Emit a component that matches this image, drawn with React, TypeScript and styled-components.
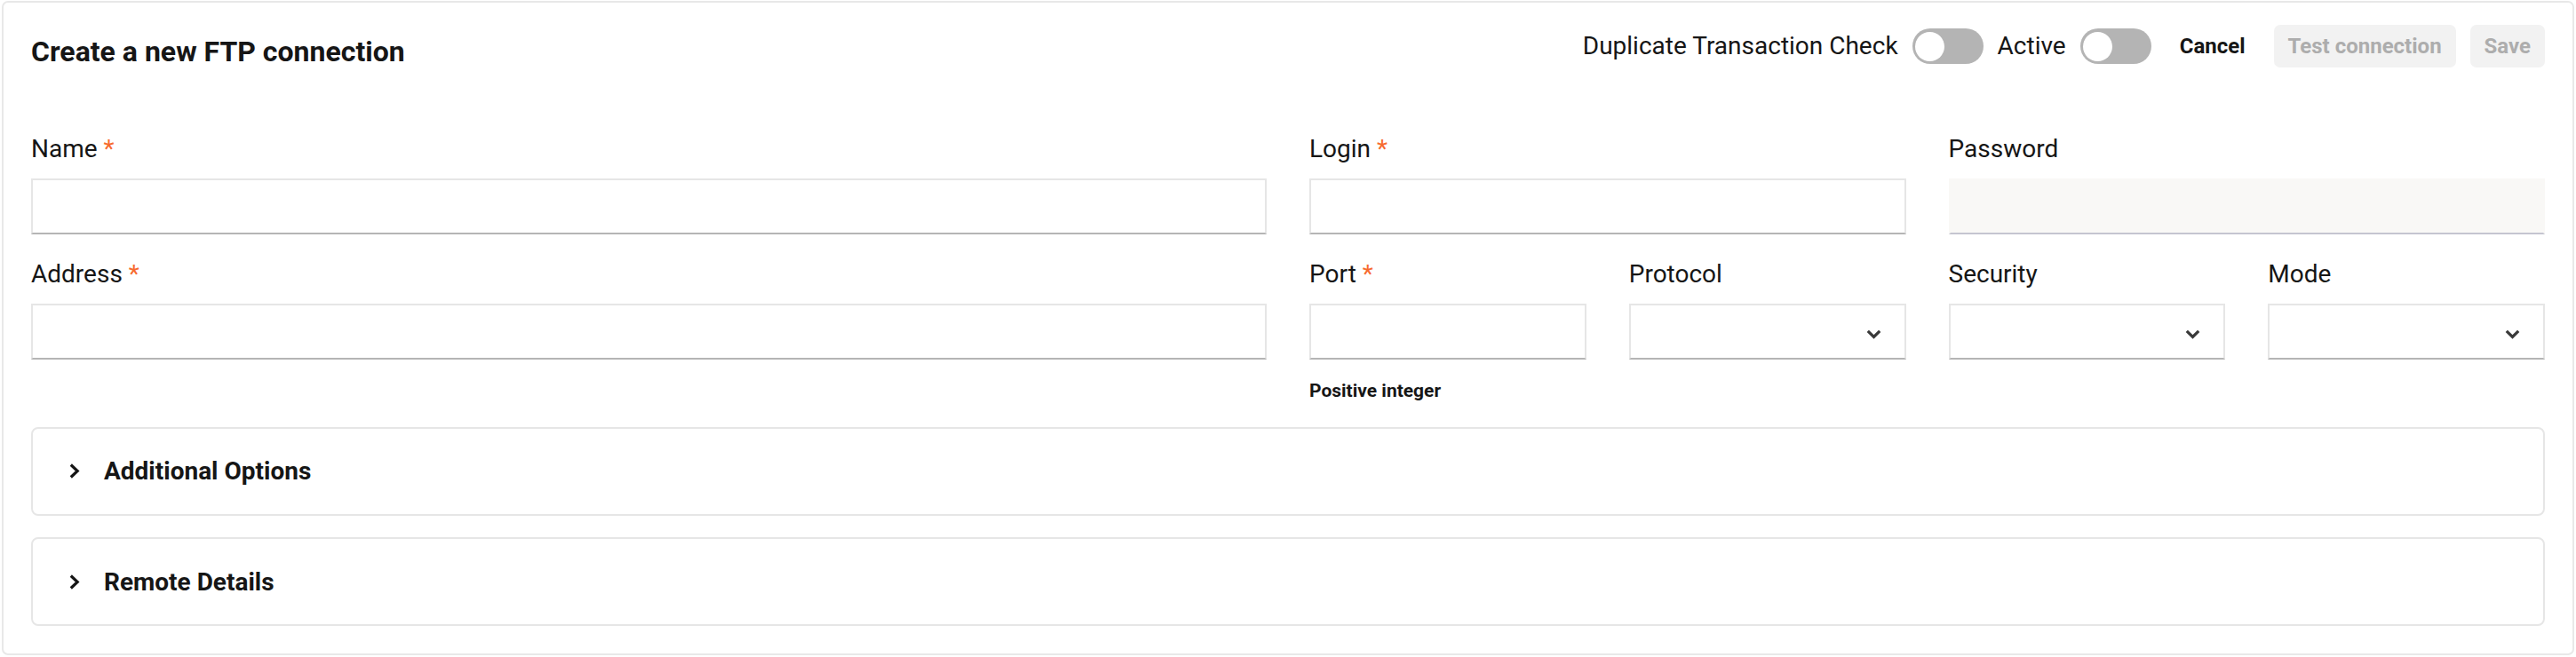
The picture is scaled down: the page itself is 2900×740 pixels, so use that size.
import React from 'react';
import styled, { createGlobalStyle } from 'styled-components';

const GlobalStyle = createGlobalStyle`
  * {
    box-sizing: border-box;
  }

  body {
    margin: 0;
    background: #ffffff;
    color: #161616;
    font-family: Roboto, "Liberation Sans", Arial, sans-serif;
  }
`;

const Page = styled.div`
  padding: 1px 2px 0;
`;

const Card = styled.section`
  border: 2px solid #e8e8e8;
  border-radius: 7px;
  padding: 25px 31px 31px;
  background: #ffffff;
`;

const Header = styled.header`
  display: flex;
  justify-content: space-between;
  align-items: flex-start;
  margin-bottom: 68px;
`;

const Title = styled.h1`
  margin: 8px 0 0;
  font-size: 32px;
  line-height: 44px;
  font-weight: 700;
`;

const Actions = styled.div`
  display: flex;
  align-items: center;
  gap: 16px;
  height: 48px;
`;

const ActionLabel = styled.span`
  font-size: 28px;
  line-height: 40px;
  white-space: nowrap;
`;

const Switch = styled.span<{ $on?: boolean }>`
  position: relative;
  display: inline-block;
  width: 80px;
  height: 40px;
  border-radius: 20px;
  background: ${p => (p.$on ? '#24a148' : '#b4b4b4')};

  &::after {
    content: '';
    position: absolute;
    top: 3.5px;
    left: ${p => (p.$on ? '43.5px' : '3.5px')};
    width: 33px;
    height: 33px;
    border-radius: 50%;
    background: #ffffff;
  }
`;

const Button = styled.button<{ $variant?: 'text' | 'disabled' }>`
  height: 48px;
  padding: 0 16px;
  border: none;
  border-radius: 7px;
  font-family: inherit;
  font-size: 24px;
  font-weight: 700;
  white-space: nowrap;
  background: ${p => (p.$variant === 'disabled' ? '#f2f2f2' : 'transparent')};
  color: ${p => (p.$variant === 'disabled' ? '#adadad' : '#161616')};
  cursor: ${p => (p.$variant === 'disabled' ? 'default' : 'pointer')};
`;

const Form = styled.div`
  display: flex;
  flex-direction: column;
  gap: 24.5px;
`;

const FieldRow = styled.div`
  display: grid;
  grid-template-columns: repeat(4, minmax(0, 1fr));
  column-gap: 48px;
  align-items: start;
`;

const FieldPair = styled.div`
  display: grid;
  grid-template-columns: repeat(2, minmax(0, 1fr));
  column-gap: 48px;
  align-items: start;
`;

const Field = styled.div<{ $span?: number }>`
  display: flex;
  flex-direction: column;
  min-width: 0;
  grid-column: span ${p => p.$span ?? 1};
`;

const Label = styled.label`
  font-size: 28px;
  line-height: 40px;
  margin-bottom: 13px;
`;

const Required = styled.span`
  color: #f76b2f;
`;

const TextInput = styled.input<{ $muted?: boolean }>`
  width: 100%;
  height: 63px;
  padding: 0 16px;
  border: 2px solid ${p => (p.$muted ? 'transparent' : '#e6e6e6')};
  border-bottom-color: ${p => (p.$muted ? '#c5c5d0' : '#b5b5b5')};
  background: ${p => (p.$muted ? '#f9f8f6' : '#ffffff')};
  font-family: inherit;
  font-size: 28px;
  color: #161616;
  outline: none;
`;

const SelectBox = styled.div`
  display: flex;
  justify-content: flex-end;
  align-items: center;
  height: 63px;
  padding: 6px 26px 0 16px;
  border: 2px solid #e6e6e6;
  border-bottom-color: #b5b5b5;
  background: #ffffff;
`;

const Helper = styled.div`
  margin-top: 20px;
  font-size: 21px;
  line-height: 31.5px;
  font-weight: 700;
`;

const Accordion = styled.button`
  display: flex;
  align-items: center;
  gap: 27px;
  width: 100%;
  height: 100px;
  padding: 0 0 0 41px;
  border: 2px solid #e6e6e6;
  border-radius: 8px;
  background: #ffffff;
  font-family: inherit;
  font-size: 28px;
  font-weight: 700;
  color: #161616;
  text-align: left;
  cursor: pointer;
`;

function SelectChevron() {
  return (
    <svg width="17" height="11" viewBox="0 0 17 11" fill="none">
      <path d="M1.8 1.8 L8.5 8.5 L15.2 1.8" stroke="#393939" strokeWidth="3.2" />
    </svg>
  );
}

function AccordionChevron() {
  return (
    <svg width="12" height="17" viewBox="0 0 12 17" fill="none">
      <path d="M1.8 1.5 L9.2 8.5 L1.8 15.5" stroke="#161616" strokeWidth="3.2" />
    </svg>
  );
}

function FieldLabel({ text, required }: { text: string; required?: boolean }) {
  return (
    <Label>
      {text}
      {required && <Required> *</Required>}
    </Label>
  );
}

function Select({ label }: { label: string }) {
  return (
    <Field>
      <FieldLabel text={label} />
      <SelectBox>
        <SelectChevron />
      </SelectBox>
    </Field>
  );
}

export default function App() {
  return (
    <Page>
      <GlobalStyle />
      <Card>
        <Header>
          <Title>Create a new FTP connection</Title>
          <Actions>
            <ActionLabel>Duplicate Transaction Check</ActionLabel>
            <Switch />
            <ActionLabel>Active</ActionLabel>
            <Switch />
            <Button $variant="text">Cancel</Button>
            <Button $variant="disabled">Test connection</Button>
            <Button $variant="disabled">Save</Button>
          </Actions>
        </Header>

        <Form>
          <FieldRow>
            <Field $span={2}>
              <FieldLabel text="Name" required />
              <TextInput />
            </Field>
            <Field>
              <FieldLabel text="Login" required />
              <TextInput />
            </Field>
            <Field>
              <FieldLabel text="Password" />
              <TextInput $muted type="password" />
            </Field>
          </FieldRow>

          <FieldRow>
            <Field $span={2}>
              <FieldLabel text="Address" required />
              <TextInput />
            </Field>
            <FieldPair>
              <Field>
                <FieldLabel text="Port" required />
                <TextInput />
                <Helper>Positive integer</Helper>
              </Field>
              <Select label="Protocol" />
            </FieldPair>
            <FieldPair>
              <Select label="Security" />
              <Select label="Mode" />
            </FieldPair>
          </FieldRow>

          <Accordion>
            <AccordionChevron />
            Additional Options
          </Accordion>
          <Accordion>
            <AccordionChevron />
            Remote Details
          </Accordion>
        </Form>
      </Card>
    </Page>
  );
}
